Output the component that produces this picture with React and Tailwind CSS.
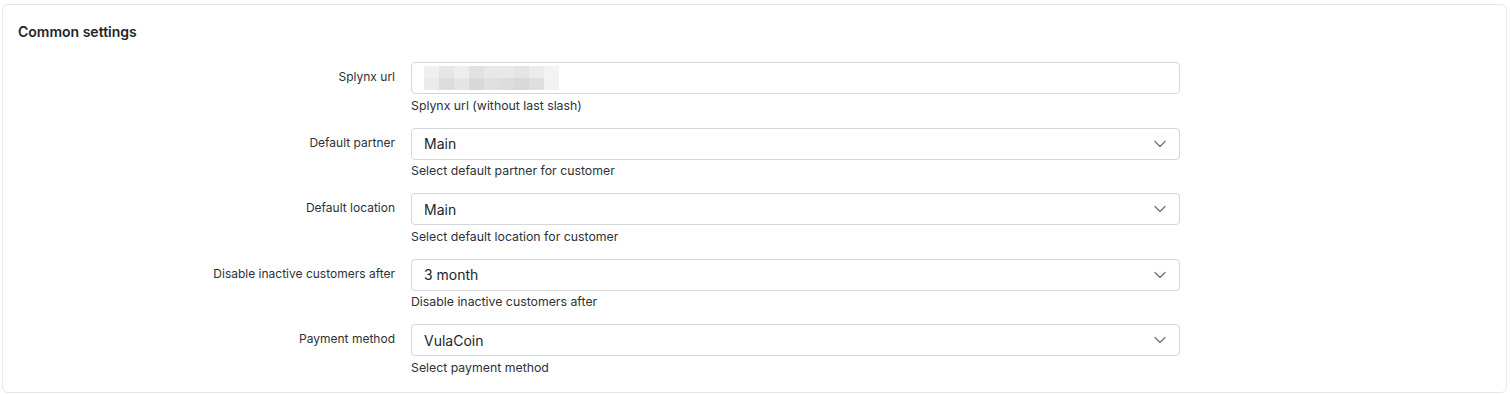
import React from 'react';

const rows = [
  { label: 'Splynx url', help: 'Splynx url (without last slash)', type: 'text' },
  { label: 'Default partner', help: 'Select default partner for customer', value: 'Main' },
  { label: 'Default location', help: 'Select default location for customer', value: 'Main' },
  { label: 'Disable inactive customers after', help: 'Disable inactive customers after', value: '3 month' },
  { label: 'Payment method', help: 'Select payment method', value: 'VulaCoin' },
];

// pixelated "blurred" url value
const blur = [
  ['#f0f0f0', '#e6e6e6', '#eeeeee', '#e2e2e2', '#e8e8e8', '#e9e9e9', '#e4e4e4', '#ececec', '#f3f3f3'],
  ['#ebebeb', '#dcdcdc', '#e4e4e4', '#d8d8d8', '#e0e0e0', '#dddddd', '#d9d9d9', '#dfdfdf', '#f1f1f1'],
];

const Chevron = () => (
  <svg width="14" height="14" viewBox="0 0 14 14" fill="none" className="text-[#6c757d]">
    <path d="M2 4.5l5 5 5-5" stroke="currentColor" strokeWidth="1.3" strokeLinecap="round" strokeLinejoin="round" />
  </svg>
);

const Field = ({ row }) => (
  <div className="flex gap-4">
    <label className="w-[377px] shrink-0 pt-[7px] text-right text-[12px] leading-4 text-[#2d3238]">{row.label}</label>
    <div className="w-[769px]">
      <div className="flex h-8 items-center justify-between rounded-[4px] border border-[#d3d6da] bg-white pl-3 pr-3">
        {row.type === 'text' ? (
          <div className="flex flex-col">
            {blur.map((line, i) => (
              <div key={i} className="flex">
                {line.map((c, j) => (
                  <div key={j} className="h-3 w-[15px]" style={{ background: c }} />
                ))}
              </div>
            ))}
          </div>
        ) : (
          <>
            <span className="text-[14px] text-[#212529]">{row.value}</span>
            <Chevron />
          </>
        )}
      </div>
      <p className="mt-[3.5px] text-[12.3px] leading-4 text-[#2d3238]">{row.help}</p>
    </div>
  </div>
);

export default function App() {
  return (
    <div className="bg-white pl-[2px] pr-[3px] pt-1 font-[Inter,sans-serif]">
      <div className="rounded-md border border-[#e4e6e9] bg-white pb-4 pl-[15px] pr-4 pt-[17px]">
        <h2 className="text-[14px] font-semibold leading-5 text-[#212529]">Common settings</h2>
        <div className="mt-5 flex flex-col gap-[14px]">
          {rows.map((r) => (
            <Field key={r.label} row={r} />
          ))}
        </div>
      </div>
    </div>
  );
}
